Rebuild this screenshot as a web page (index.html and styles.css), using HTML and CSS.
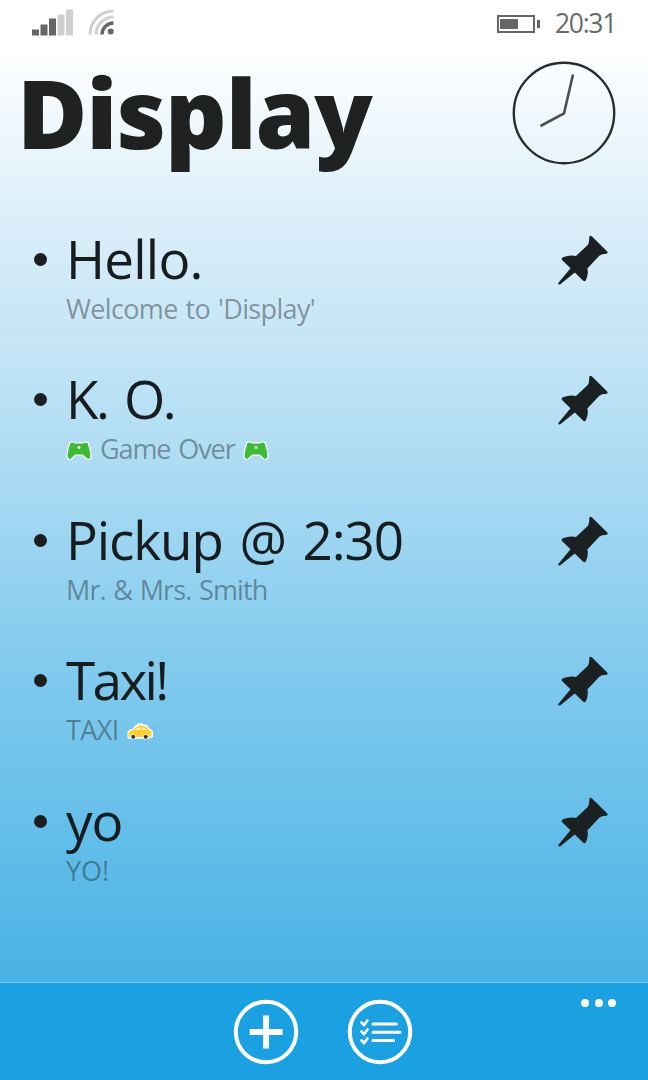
FILE: index.html
```html
<!DOCTYPE html>
<html lang="en">
<head>
<meta charset="UTF-8" />
<meta name="viewport" content="width=device-width, initial-scale=1" />
<title>Display</title>
<link rel="stylesheet" href="styles.css">
</head>
<body>

<!-- shared icons -->
<svg class="defs" width="0" height="0">
  <symbol id="pin" viewBox="0 0 50 50">
    <path d="M31.300 1.700Q32.500 0 34 1.500L49 16.300Q50.500 18 48.500 18.800Q43.500 19 41.300 20.800L29.300 33.500Q30.800 38.500 28 45Q26.800 47.200 25 45.500L16.800 37.500L2 49.500Q0 50 .3 48L12.500 33.300L4 25Q3 23.500 5 22.300Q12 19.300 18 21L29.700 10Q31.300 8 31.300 1.700Z" />
  </symbol>
  <symbol id="pad" viewBox="0 0 26 20">
    <path d="M4.500 2Q6 1 8.500 2.500H17Q20 1 21.500 2Q24 8 24.500 15Q24 19 21 17.500L17 13.500H9L5 17.500Q2 19 1.500 15Q2 8 4.500 2Z" fill="#fff" stroke="#fff" stroke-width="2.400" stroke-linejoin="round" />
    <path d="M4.500 2Q6 1 8.500 2.500H17Q20 1 21.500 2Q24 8 24.500 15Q24 19 21 17.500L17 13.500H9L5 17.500Q2 19 1.500 15Q2 8 4.500 2Z" fill="#3dbb35" />
    <circle cx="13" cy="6.500" r="1.400" fill="#fff" />
  </symbol>
</svg>

<div class="status-bar">
  <svg class="signal" width="42" height="27" viewBox="0 0 42 27">
    <g fill="#666"><path d="M0 20.500h7v6H0zM8.500 15.500h7v11h-7zM17 9.500h7v17h-7z" /></g>
    <g fill="#d0d0d0"><path d="M25.500 5.500h7v21h-7zM34 .5h7v26h-7z" /></g>
  </svg>
  <svg class="wifi" width="28" height="28" viewBox="0 0 28 28" fill="none" stroke-width="3">
    <path d="M2 26.500A23.500 23.500 0 0 1 25.500 3M8 26.500A17.500 17.500 0 0 1 25.500 9" stroke="#d0d0d0" />
    <path d="M14 26.500A11.500 11.500 0 0 1 25.500 15" stroke="#666" stroke-width="3.500" />
    <circle cx="22.700" cy="23.500" r="3" fill="#666" />
  </svg>
  <svg class="battery" width="44" height="18" viewBox="0 0 44 18">
    <rect x="1" y="1" width="36" height="16" fill="none" stroke="#666" stroke-width="2" />
    <path d="M3 4h18v10H3zM40 5h3v8h-3z" fill="#666" />
  </svg>
  <span class="time">20:31</span>
</div>

<div class="page">
  <div class="header">
    <h1>Display</h1>
    <svg class="clock" width="104" height="104" viewBox="0 0 104 104" fill="none" stroke="#2a2d2f">
      <circle cx="52" cy="52" r="50.200" stroke-width="2.400" />
      <path d="M61 13.500L52 52.500L28.500 65" stroke="#4a4e50" stroke-width="2.600" />
    </svg>
  </div>

  <ul class="list">
    <li>
      <span class="bullet"></span>
      <div class="item">
        <h2 class="hello">Hello.</h2>
        <p class="welcome">Welcome to 'Display'</p>
      </div>
      <svg class="pin"><use href="#pin" /></svg>
    </li>
    <li>
      <span class="bullet"></span>
      <div class="item">
        <h2 class="ko">K. O.</h2>
        <p class="game"><svg class="emoji"><use href="#pad" /></svg><span>Game Over</span><svg class="emoji"><use href="#pad" /></svg></p>
      </div>
      <svg class="pin"><use href="#pin" /></svg>
    </li>
    <li>
      <span class="bullet"></span>
      <div class="item">
        <h2 class="pickup">Pickup @ 2:30</h2>
        <p class="smith">Mr. &amp; Mrs. Smith</p>
      </div>
      <svg class="pin"><use href="#pin" /></svg>
    </li>
    <li>
      <span class="bullet"></span>
      <div class="item">
        <h2 class="taxi">Taxi!</h2>
        <p class="cab"><span>TAXI</span>
          <svg class="emoji" viewBox="0 0 27 18">
            <path d="M2 14.500V9.500Q3 7.500 6.500 7L9.500 3.500Q10 3 12 3V1.500H15V2.500L20 3L22 6.500Q25 7.500 25.500 9V13.500L22 14.500Z" fill="#fff" stroke="#fff" stroke-width="3" stroke-linejoin="round" />
            <path d="M1.500 14V10Q3 7.500 6.500 7L9.500 3.500Q10 3 12 3V1.500H15V2.500L20 3L22 6.500Q25 7.500 25.500 9V13.500L22 14.500Z" fill="#ffcf2e" />
            <path d="M8.500 7L10.500 4.500H14V7ZM15.500 7V4.500H19L20.500 7Z" fill="#fff2c0" />
            <g fill="#333" stroke="#fff" stroke-width=".8"><circle cx="6.500" cy="14" r="2.500" /><circle cx="19.500" cy="14" r="2.500" /></g>
          </svg>
        </p>
      </div>
      <svg class="pin"><use href="#pin" /></svg>
    </li>
    <li>
      <span class="bullet"></span>
      <div class="item">
        <h2 class="yo">yo</h2>
        <p>YO!</p>
      </div>
      <svg class="pin"><use href="#pin" /></svg>
    </li>
  </ul>
</div>

<div class="app-bar">
  <svg width="66" height="66" viewBox="0 0 66 66" fill="none" stroke="#fff">
    <circle cx="33" cy="33" r="30.200" stroke-width="4" />
    <path d="M33 16.500V49.500M16.700 33H49.500" stroke-width="5.800" />
  </svg>
  <svg width="66" height="66" viewBox="0 0 66 66" fill="none" stroke="#fff" stroke-linecap="round">
    <circle cx="33" cy="33" r="30.200" stroke-width="4" />
    <path d="M26 25H49.500M26 33.200H53M26 41.500H46.500" stroke-width="3" />
    <path d="M14.500 23.500L17 26L20.500 21.500M14.500 32.500L17 35L20.500 30.500M14.500 41.500L17 44L20.500 39.500" stroke-width="2.600" />
  </svg>
  <div class="more"><i></i><i></i><i></i></div>
</div>

</body>
</html>
```
FILE: styles.css
```css
* {
  box-sizing: border-box;
  margin: 0;
  padding: 0;
}
body {
  width: 648px;
  height: 1080px;
  display: flex;
  flex-direction: column;
  overflow: hidden;
  font-family: "Open Sans", "Noto Sans", sans-serif;
  color: #1d2021;
  background: linear-gradient(#fff 0, #fff 48px, #daeef9 225px, #aedcf3 460px, #84ccee 650px, #49b2e5 982px);
}
.defs {
  position: absolute;
}
.status-bar {
  height: 48px;
  display: flex;
  align-items: flex-start;
  padding: 9px 32px 0;
}
.wifi {
  margin-left: 14px;
  margin-top: -1px;
}
.battery {
  margin-left: auto;
  margin-top: 6px;
}
.time {
  width: 61px;
  margin-left: 14px;
  font-size: 26.5px;
  line-height: 28px;
  color: #6b6b6b;
  letter-spacing: -1.3px;
  white-space: nowrap;
}
.page {
  flex: 1;
}
.header {
  display: flex;
  justify-content: space-between;
  height: 180px;
  padding: 13px 32px 0 17px;
}
h1 {
  margin-top: 1px;
  font-size: 96px;
  line-height: 100px;
  font-weight: 800;
  letter-spacing: -1.1px;
  color: #202222;
}
.list {
  list-style: none;
}
.list li {
  display: flex;
  height: 140.4px;
  padding: 0 40px 0 34px;
}
.bullet {
  width: 13px;
  height: 13px;
  margin-top: 25px;
  border-radius: 50%;
  background: #1b1f21;
}
.item {
  flex: 1;
  margin-top: 1px;
  margin-left: 19px;
}
h2 {
  font-size: 53px;
  line-height: 60px;
  font-weight: 400;
  color: #171c1f;
  white-space: nowrap;
}
.hello {
  letter-spacing: -0.8px;
}
.ko {
  letter-spacing: -2.4px;
  word-spacing: 5px;
}
.pickup {
  letter-spacing: -1.1px;
  word-spacing: 4px;
}
.taxi {
  letter-spacing: -2.6px;
}
.yo {
  letter-spacing: -1px;
}
.item p {
  display: flex;
  align-items: center;
  margin-top: 3px;
  font-size: 27px;
  line-height: 34px;
  color: rgba(30, 40, 45, 0.45);
  white-space: nowrap;
}
.item .welcome {
  letter-spacing: -0.65px;
  word-spacing: 1.5px;
}
.item .game {
  letter-spacing: -1.1px;
  word-spacing: 2px;
}
.item .smith {
  letter-spacing: -0.9px;
  word-spacing: 1.5px;
}
.item .cab {
  letter-spacing: -0.6px;
}
.emoji {
  width: 26px;
  height: 20px;
  margin-top: 3px;
  flex: none;
  overflow: visible;
}
.game span {
  margin: 0 8px;
}
.cab span {
  margin-right: 8px;
}
.pin {
  width: 50px;
  height: 50px;
  margin-top: 7px;
  fill: #1b2022;
}
.app-bar {
  height: 98px;
  display: flex;
  justify-content: center;
  gap: 48px;
  padding: 15.5px 2px 0 0;
  position: relative;
  background: #1ba1e2;
  border-top: 1px solid #76c4ec;
}
.more {
  position: absolute;
  top: 16px;
  right: 32px;
  display: flex;
  gap: 5.5px;
}
.more i {
  width: 8px;
  height: 8px;
  border-radius: 50%;
  background: #fff;
}
```
